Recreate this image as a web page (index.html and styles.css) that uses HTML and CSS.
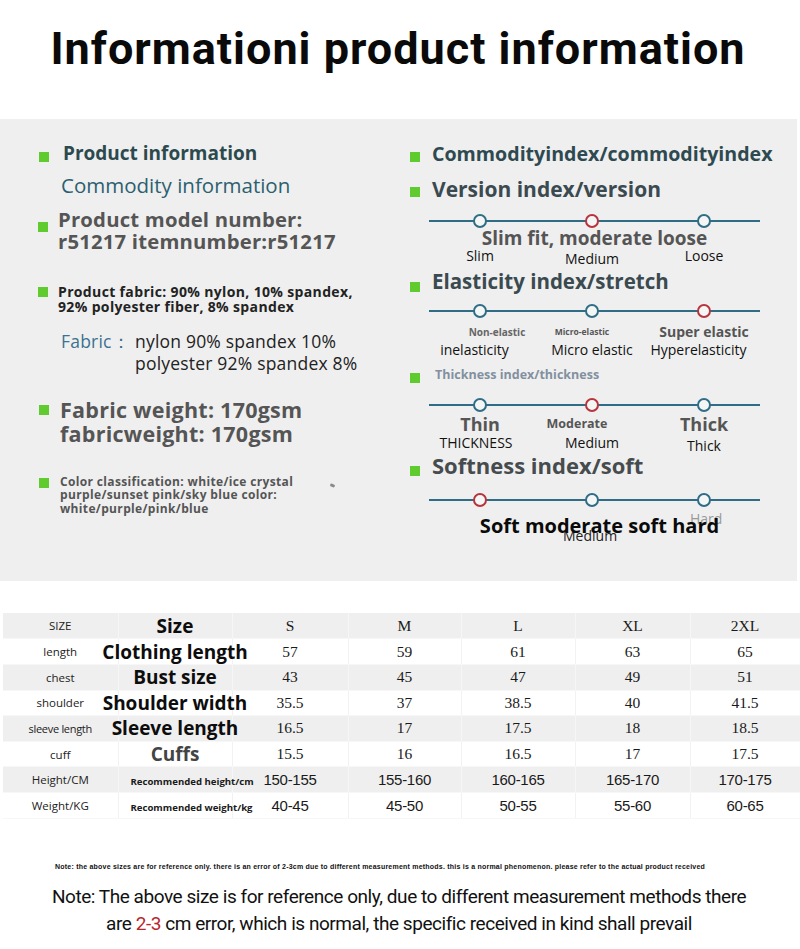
FILE: index.html
```html
<!DOCTYPE html>
<html lang="en">
<head>
<meta charset="utf-8">
<title>Product information</title>
<link rel="stylesheet" href="styles.css">
</head>
<body>
<header class="head">
  <h1 class="title">Informationi product information</h1>
</header>

<section class="panel">
  <div class="col col-left">
    <div class="item it-1"><span class="dot"></span><p class="t-prod">Product information</p></div>
    <p class="t-comm">Commodity information</p>
    <div class="item it-3"><span class="dot"></span><p class="t-model">Product model number:<br>r51217 itemnumber:r51217</p></div>
    <div class="item it-4"><span class="dot"></span><p class="t-fab">Product fabric: 90% nylon, 10% spandex,<br>92% polyester fiber, 8% spandex</p></div>
    <div class="fabric"><span class="fab-label">Fabric：</span><span class="fab-val">nylon 90% spandex 10%<br>polyester 92% spandex 8%</span></div>
    <div class="item it-6"><span class="dot"></span><p class="t-weight">Fabric weight: 170gsm<br>fabricweight: 170gsm</p></div>
    <div class="item it-7"><span class="dot"></span><p class="t-color">Color classification: white/ice crystal<br>purple/sunset pink/sky blue color:<br>white/purple/pink/blue</p><span class="speck"></span></div>
  </div>

  <div class="col col-right">
    <div class="ritem r-1"><span class="dot"></span><p class="h-comm">Commodityindex/commodityindex</p></div>
    <div class="ritem r-2"><span class="dot"></span><p class="h-idx">Version index/version</p></div>
    <div class="scale s-1"><span class="ring"></span><span class="ring red"></span><span class="ring"></span></div>
    <p class="scale-title">Slim fit, moderate loose</p>
    <div class="labels l-1"><span>Slim</span><span class="down">Medium</span><span>Loose</span></div>

    <div class="ritem r-3"><span class="dot"></span><p class="h-idx h-el">Elasticity index/stretch</p></div>
    <div class="scale s-2"><span class="ring"></span><span class="ring"></span><span class="ring red"></span></div>
    <div class="labels l-2">
      <div class="cell"><span class="top tiny nudge">Non-elastic</span><span class="bot bl">inelasticity</span></div>
      <div class="cell"><span class="top micro">Micro-elastic</span><span class="bot">Micro elastic</span></div>
      <div class="cell"><span class="top">Super elastic</span><span class="bot bl">Hyperelasticity</span></div>
    </div>

    <div class="ritem r-4"><span class="dot"></span><p class="h-thick">Thickness index/thickness</p></div>
    <div class="scale s-3"><span class="ring"></span><span class="ring red"></span><span class="ring"></span></div>
    <div class="labels l-3">
      <div class="cell"><span class="top big">Thin</span><span class="bot left">THICKNESS</span></div>
      <div class="cell"><span class="top mid">Moderate</span><span class="bot">Medium</span></div>
      <div class="cell"><span class="top big">Thick</span><span class="bot lower">Thick</span></div>
    </div>

    <div class="ritem r-5"><span class="dot"></span><p class="h-soft">Softness index/soft</p></div>
    <div class="scale s-4"><span class="ring red"></span><span class="ring"></span><span class="ring"></span></div>
    <div class="soft">
      <span class="soft-hard">Hard</span>
      <span class="soft-medium">Medium</span>
      <p class="soft-text">Soft moderate soft hard</p>
    </div>
  </div>
</section>

<table class="sizes">
  <colgroup>
    <col class="c1"><col class="c2"><col class="c3"><col class="c4"><col class="c5"><col class="c6"><col class="c7">
  </colgroup>
  <tbody>
    <tr class="g"><td class="k">SIZE</td><td class="n"><span>Size</span></td><td>S</td><td>M</td><td>L</td><td>XL</td><td>2XL</td></tr>
    <tr><td class="k">length</td><td class="n"><span>Clothing length</span></td><td>57</td><td>59</td><td>61</td><td>63</td><td>65</td></tr>
    <tr class="g"><td class="k">chest</td><td class="n"><span>Bust size</span></td><td>43</td><td>45</td><td>47</td><td>49</td><td>51</td></tr>
    <tr><td class="k">shoulder</td><td class="n"><span>Shoulder width</span></td><td>35.5</td><td>37</td><td>38.5</td><td>40</td><td>41.5</td></tr>
    <tr class="g"><td class="k sm">sleeve length</td><td class="n"><span>Sleeve length</span></td><td>16.5</td><td>17</td><td>17.5</td><td>18</td><td>18.5</td></tr>
    <tr><td class="k">cuff</td><td class="n grey"><span>Cuffs</span></td><td>15.5</td><td>16</td><td>16.5</td><td>17</td><td>17.5</td></tr>
    <tr class="g r"><td class="k">Height/CM</td><td class="rec"><span>Recommended height/cm</span></td><td>150-155</td><td>155-160</td><td>160-165</td><td>165-170</td><td>170-175</td></tr>
    <tr class="r"><td class="k">Weight/KG</td><td class="rec"><span>Recommended weight/kg</span></td><td>40-45</td><td>45-50</td><td>50-55</td><td>55-60</td><td>60-65</td></tr>
  </tbody>
</table>

<p class="note-small">Note: the above sizes are for reference only. there is an error of 2-3cm due to different measurement methods. this is a normal phenomenon. please refer to the actual product received</p>
<p class="note-big">Note: The above size is for reference only, due to different measurement methods there<br>are <span class="red-txt">2-3</span> cm error, which is normal, the specific received in kind shall prevail</p>
</body>
</html>
```

FILE: styles.css
```css
* { box-sizing: border-box; }
html, body { margin: 0; padding: 0; background: #fff; }
body { width: 800px; height: 949px; overflow: hidden; font-family: "Open Sans", "Noto Sans", sans-serif; color: #222; }
p { margin: 0; }

.head { height: 119px; padding-top: 21px; }
.title {
  margin: 0; text-align: center; padding-right: 4px;
  font-family: "Roboto", "Liberation Sans", sans-serif;
  font-weight: 700; font-size: 45px; line-height: 56px; color: #0a0a0a;
  letter-spacing: 1px;
}

.panel {
  width: 797px; height: 462px; background: #efefef;
  display: grid; grid-template-columns: 410px 387px;
}
.col-left { padding-left: 38px; }
.dot { flex: 0 0 10px; width: 10px; height: 10px; background: #5fcb2e; }

.item { display: flex; align-items: flex-start; }
.it-1 { margin-top: 21.6px; gap: 14px; }
.it-1 .dot { margin-top: 11.5px; margin-left: 1px; }
.t-prod { font-size: 19px; line-height: 24px; font-weight: 700; color: #2c4a4e; }
.t-comm { margin: 7.3px 0 0 23px; font-size: 20.5px; line-height: 26px; color: #2d5f70; }
.it-3 { margin-top: 10.3px; gap: 10px; }
.it-3 .dot { margin-top: 13.5px; }
.t-model { font-size: 20.3px; line-height: 22px; font-weight: 700; color: #555; letter-spacing: 0.2px; }
.it-4 { margin-top: 32.3px; gap: 10px; }
.it-4 .dot { margin-top: 2.2px; }
.t-fab { font-size: 14px; line-height: 15px; font-weight: 700; color: #222; letter-spacing: 0.35px; }
.fabric { margin: 15.9px 0 0 23px; display: flex; font-size: 17.5px; line-height: 22px; color: #222; letter-spacing: 0.2px; }
.fab-label { width: 74px; color: #3a7290; }
.it-6 { margin-top: 23.5px; gap: 11px; }
.it-6 .dot { margin-top: 7px; margin-left: 1px; }
.t-weight { font-size: 21.5px; line-height: 24px; font-weight: 700; color: #555; letter-spacing: 0.25px; }
.it-7 { margin-top: 28.9px; gap: 11px; }
.it-7 .dot { margin-top: 3.5px; margin-left: 1px; }
.t-color { font-size: 12px; line-height: 13.5px; font-weight: 700; color: #555; letter-spacing: 0.35px; }
.speck { width: 5px; height: 3px; margin: 9px 0 0 26px; background: #8a8a8a; border-radius: 2px; transform: rotate(20deg); }

/* right column */
.ritem { display: flex; align-items: flex-start; gap: 12px; }
.r-1 { margin-top: 23.2px; }
.r-1 .dot { margin-top: 9.5px; }
.h-comm { font-size: 19.6px; line-height: 24px; font-weight: 700; color: #2e4a50; }
.h-idx { font-size: 21px; line-height: 26px; font-weight: 700; color: #3a4a50; }
.h-el { font-size: 20.5px; }
.r-2 { margin-top: 9.7px; }
.r-2 .dot { margin-top: 10.8px; }
.r-3 { margin-top: 3.9px; }
.r-3 .dot { margin-top: 14px; }
.r-4 { margin-top: 8.5px; }
.r-4 .dot { margin-top: 5.7px; }
.h-thick { font-size: 12.5px; line-height: 16px; font-weight: 700; color: #8290a0; margin-left: 3px; }
.r-5 { margin-top: 1.1px; }
.r-5 .dot { margin-top: 14.2px; }
.h-soft { font-size: 22px; line-height: 26px; font-weight: 700; color: #464b4e; }

.scale {
  width: 331px; height: 14px; margin-left: 19px;
  display: flex; gap: 98px; padding-left: 44px;
  background: linear-gradient(to bottom, transparent 6px, #2f6d86 6px, #2f6d86 8px, transparent 8px);
}
.ring { width: 14px; height: 14px; border-radius: 50%; border: 2px solid #2f6d86; background: #f4f6f6; }
.ring.red { border-color: #b8343c; }
.s-1 { margin-top: 12.1px; }
.s-2 { margin-top: 10.3px; }
.s-3 { margin-top: 14.3px; }
.s-4 { margin-top: 15.2px; }

.scale-title { margin-left: 19px; width: 331px; text-align: center; font-size: 19px; line-height: 20px; font-weight: 700; color: #555; }

.labels { display: grid; grid-template-columns: repeat(3, 112px); margin-left: 14px; text-align: center; color: #111; }
.l-1 { font-size: 14px; line-height: 16px; height: 16px; }
.l-1 .down { padding-top: 3px; }
.cell { display: flex; flex-direction: column; align-items: center; }
.l-2 { margin-top: 4.8px; height: 36px; }
.l-2 .top { font-size: 14px; line-height: 18px; font-weight: 700; color: #555; }
.l-2 .top.tiny { font-size: 10px; color: #666; }
.l-2 .top.micro { font-size: 8.5px; color: #555; margin-left: -20px; }
.l-2 .top.nudge { margin-left: 34px; }
.l-2 .bot { font-size: 14px; line-height: 18px; }
.l-2 .bot.bl { margin-left: -11px; }
.l-3 { margin-top: 2.4px; height: 37px; }
.l-3 .top { font-size: 18px; line-height: 20px; font-weight: 700; color: #555; }
.l-3 .top.mid { font-size: 12.5px; color: #555; margin-left: -30px; }
.l-3 .bot { font-size: 14px; line-height: 17px; }
.l-3 .bot.left { margin-left: -8px; }
.l-3 .bot.lower { padding-top: 3px; }

.soft { position: relative; margin: 7.7px 0 0 19px; width: 331px; }
.soft-text { position: relative; text-align: center; padding-left: 10px; font-size: 20px; line-height: 22px; font-weight: 700; color: #0a0a0a; }
.soft-hard { position: absolute; left: 261px; top: -4px; font-size: 14px; line-height: 16px; color: #9a9a9a; }
.soft-medium { position: absolute; left: 134px; top: 13px; font-size: 14px; line-height: 16px; color: #222; }

/* table */
.sizes { margin: 32.3px 0 0 3px; width: 797px; border-collapse: collapse; table-layout: fixed; }
.c1 { width: 115px; } .c2 { width: 114px; } .c3 { width: 116px; } .c4 { width: 113px; }
.c5 { width: 114px; } .c6 { width: 115px; } .c7 { width: 110px; }
.sizes tr { height: 25.6px; }
.sizes tr.g { background: #efefef; }
.sizes td {
  padding: 0; text-align: center; vertical-align: middle; white-space: nowrap;
  font-family: "Liberation Serif", serif; font-size: 15.5px; color: #1a1a1a;
  border-right: 1px solid #f2f2f2; border-bottom: 1px solid #f7f7f7;
}
.sizes tr.g td { border-right-color: #f6f6f6; }
.sizes td.k { font-family: "Open Sans", sans-serif; font-size: 11.5px; color: #222; }
.sizes td.k.sm { font-size: 11px; letter-spacing: -0.3px; }
.sizes td.n span { display: block; margin: 0 -40px; font-family: "Open Sans", sans-serif; font-size: 19px; font-weight: 700; color: #0d0d0d; line-height: 20px; }
.sizes td.n.grey span { color: #444; }
.sizes tr.r td { font-family: "Liberation Sans", sans-serif; font-size: 15px; letter-spacing: -0.3px; }
.sizes tr.r td.k { font-family: "Open Sans", sans-serif; font-size: 11.5px; letter-spacing: 0; }
.sizes td.rec { text-align: left; overflow: visible; }
.sizes td.rec span { font-family: "Open Sans", sans-serif; font-size: 9.6px; font-weight: 700; letter-spacing: 0; padding-left: 12px; }

.note-small {
  margin: 43px 0 0 55px; font-family: "Liberation Sans", sans-serif;
  font-size: 7px; line-height: 10px; font-weight: 700; color: #111; white-space: nowrap; letter-spacing: 0.22px;
}
.note-big {
  margin: 11px 0 0 0; padding-right: 2px; text-align: center;
  font-family: "Roboto", "Liberation Sans", sans-serif;
  font-size: 19px; line-height: 27px; color: #111; letter-spacing: -0.45px;
}
.red-txt { color: #b8262e; }
```
